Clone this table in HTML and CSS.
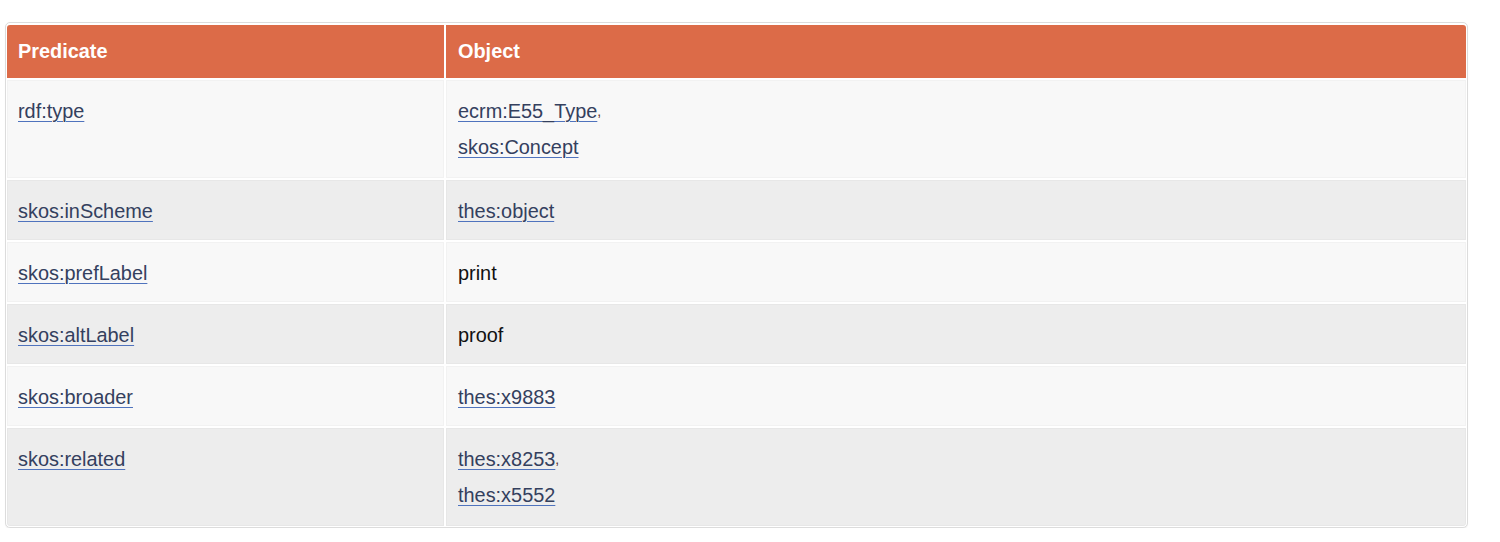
FILE: index.html
```html
<!DOCTYPE html>
<html lang="en">
<head>
<meta charset="utf-8">
<title>Predicate / Object</title>
<link rel="stylesheet" href="styles.css">
</head>
<body>
<div class="table">
  <div class="row head">
    <div class="cell">Predicate</div>
    <div class="cell">Object</div>
  </div>
  <div class="row odd multi">
    <div class="cell"><a href="#" class="plain">rdf:type</a></div>
    <div class="cell">
      <div class="val"><a href="#">ecrm:E55_Type</a><span class="sep">,</span></div>
      <div class="val"><a href="#">skos:Concept</a></div>
    </div>
  </div>
  <div class="row even">
    <div class="cell"><a href="#">skos:inScheme</a></div>
    <div class="cell"><a href="#">thes:object</a></div>
  </div>
  <div class="row odd">
    <div class="cell"><a href="#">skos:prefLabel</a></div>
    <div class="cell"><span class="lit">print</span></div>
  </div>
  <div class="row even">
    <div class="cell"><a href="#">skos:altLabel</a></div>
    <div class="cell"><span class="lit">proof</span></div>
  </div>
  <div class="row odd">
    <div class="cell"><a href="#">skos:broader</a></div>
    <div class="cell"><a href="#">thes:x9883</a></div>
  </div>
  <div class="row even multi">
    <div class="cell"><a href="#">skos:related</a></div>
    <div class="cell">
      <div class="val"><a href="#">thes:x8253</a><span class="sep">,</span></div>
      <div class="val"><a href="#">thes:x5552</a></div>
    </div>
  </div>
</div>
</body>
</html>
```

FILE: styles.css
```css
html, body {
  margin: 0;
  padding: 0;
  background: #ffffff;
}

body {
  font-family: "Liberation Sans", Arial, Helvetica, sans-serif;
  font-size: 19.9px;
  color: #111111;
}

.table {
  margin: 22px 0 0 5px;
  width: 1463px;
  box-sizing: border-box;
  border: 1px solid #dcdcdc;
  border-radius: 5px;
  padding: 2px 1px 1px 1px;
  background: #ffffff;
  box-shadow: 0 1px 1px rgba(0, 0, 0, 0.06);
  display: flex;
  flex-direction: column;
  gap: 2px;
}

.row {
  display: grid;
  grid-template-columns: 437px 1fr;
  column-gap: 2px;
}

.cell {
  padding: 13px 11px 11px 11px;
  line-height: 36px;
  box-shadow: inset 0 0 0 1px rgba(0, 0, 0, 0.025);
}

.cell + .cell {
  padding-left: 12px;
}

.multi .cell {
  padding-top: 13px;
  padding-bottom: 13px;
}

.head .cell {
  background: #dc6b48;
  color: #ffffff;
  font-weight: bold;
  padding-top: 8px;
  padding-bottom: 9px;
  box-shadow: none;
}

.head .cell:first-child {
  border-top-left-radius: 3px;
}

.head .cell:last-child {
  border-top-right-radius: 3px;
}

.odd .cell {
  background: #f8f8f8;
}

.even .cell {
  background: #ededed;
}

.row:last-child .cell:first-child {
  border-bottom-left-radius: 3px;
}

.row:last-child .cell:last-child {
  border-bottom-right-radius: 3px;
}

a {
  color: #34405e;
  text-decoration: underline;
  text-decoration-color: #4f73bd;
  text-decoration-thickness: 1px;
  text-underline-offset: 3px;
}

.lit {
  color: #111111;
}

.sep {
  font-size: 14px;
  color: #5a2a1e;
  vertical-align: 2px;
}

.val {
  line-height: 36px;
}
```
